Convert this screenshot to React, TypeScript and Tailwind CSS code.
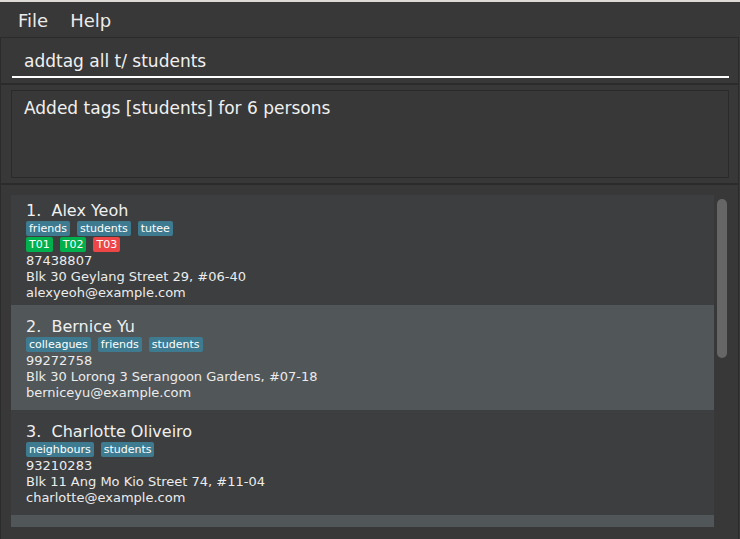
import React from 'react';

type Person = {
  name: string;
  tags: string[];
  tutorials?: { code: string; ok: boolean }[];
  phone: string;
  address: string;
  email: string;
};

const people: Person[] = [
  {
    name: 'Alex Yeoh',
    tags: ['friends', 'students', 'tutee'],
    tutorials: [
      { code: 'T01', ok: true },
      { code: 'T02', ok: true },
      { code: 'T03', ok: false },
    ],
    phone: '87438807',
    address: 'Blk 30 Geylang Street 29, #06-40',
    email: 'alexyeoh@example.com',
  },
  {
    name: 'Bernice Yu',
    tags: ['colleagues', 'friends', 'students'],
    phone: '99272758',
    address: 'Blk 30 Lorong 3 Serangoon Gardens, #07-18',
    email: 'berniceyu@example.com',
  },
  {
    name: 'Charlotte Oliveiro',
    tags: ['neighbours', 'students'],
    phone: '93210283',
    address: 'Blk 11 Ang Mo Kio Street 74, #11-04',
    email: 'charlotte@example.com',
  },
];

function PersonCard({ person, index }: { person: Person; index: number }) {
  const odd = index % 2 === 1;
  return (
    <div
      className={`flex shrink-0 flex-col justify-center pl-[15px] pt-[2px] ${
        odd ? 'bg-[#515658]' : 'bg-[#3c3e3f]'
      } ${person.tutorials ? 'h-[110px]' : 'h-[105px]'}`}
    >
      <div className="whitespace-pre text-[16px] leading-[20px] text-[#f0f0f0]">
        {index + 1}.  {person.name}
      </div>
      <div className="flex h-4 items-start gap-[7px]">
        {person.tags.map((t) => (
          <span key={t} className="rounded-[2px] bg-[#3e7b91] px-[3px] py-px text-[11px] leading-[13px] text-white">
            {t}
          </span>
        ))}
      </div>
      {person.tutorials && (
        <div className="flex h-4 items-start gap-[7px]">
          {person.tutorials.map((t) => (
            <span
              key={t.code}
              className={`rounded-[2px] px-[3px] py-px text-[11px] leading-[13px] text-white ${
                t.ok ? 'bg-[#00b04c]' : 'bg-[#ee4646]'
              }`}
            >
              {t.code}
            </span>
          ))}
        </div>
      )}
      <div className="text-[13px] leading-4 text-[#ececec]">{person.phone}</div>
      <div className="text-[13px] leading-4 text-[#ececec]">{person.address}</div>
      <div className="text-[13px] leading-4 text-[#ececec]">{person.email}</div>
    </div>
  );
}

export default function App() {
  return (
    <div className="flex h-[539px] w-[740px] flex-col overflow-hidden bg-[#383838] font-['DejaVu_Sans',sans-serif]">
      <div className="h-[2px] shrink-0 bg-[#dedad6]" />

      {/* menu bar */}
      <div className="flex h-[35px] shrink-0 items-center gap-[22px] pl-[18px] pt-[1px] text-[18px] text-[#ebebeb]">
        <span>File</span>
        <span>Help</span>
      </div>

      <div className="mr-[1px] flex min-h-0 flex-1 flex-col border-x border-[#2b2b2b]">
        {/* command box */}
        <div className="h-[46px] shrink-0 border-t border-[#2b2b2b] pl-[11px] pr-[9px] pt-[6px]">
          <div className="flex h-[34px] items-center border-b-2 border-white pl-3 pt-[4px] text-[17px] text-[#f0f0f0]">
            addtag all t/ students
          </div>
        </div>

        {/* result display */}
        <div className="h-[100px] shrink-0 border-t-2 border-[#2b2b2b] pl-[10px] pr-[9px] pt-[5px]">
          <div className="h-[88px] border border-[#2a2a2a] px-3 pt-[7px] text-[17px] leading-[20px] text-[#f0f0f0]">
            Added tags [students] for 6 persons
          </div>
        </div>

        {/* person list */}
        <div className="flex min-h-0 flex-1 border-t-2 border-[#2b2b2b] pl-[10px] pr-[9px] pt-[10px] pb-[12px]">
          <div className="flex min-h-0 flex-1 flex-col overflow-hidden">
            {people.map((p, i) => (
              <PersonCard key={p.name} person={p} index={i} />
            ))}
            <div className="h-[40px] shrink-0 bg-[#515658]" />
          </div>
          <div className="w-[15px] shrink-0 pl-[3px] pt-[4px]">
            <div className="h-[159px] w-[10px] rounded-[5px] bg-[#666666]" />
          </div>
        </div>
      </div>
    </div>
  );
}
